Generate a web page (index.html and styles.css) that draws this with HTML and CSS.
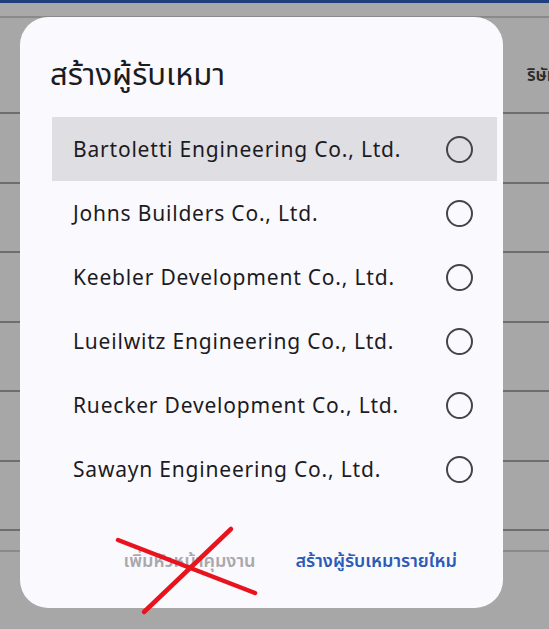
FILE: index.html
```html
<!DOCTYPE html>
<html lang="th">
<head>
<meta charset="utf-8">
<link rel="stylesheet" href="styles.css">
</head>
<body>
<div class="page">
  <div class="topbar"></div>
  <div class="subbar"></div>
  <div class="table">
    <div class="thead"><span class="th">ริษัท</span></div>
    <div class="tr"></div>
    <div class="tr"></div>
    <div class="tr"></div>
    <div class="tr"></div>
    <div class="tr"></div>
    <div class="tr"></div>
    <div class="tr short"></div>
  </div>
</div>

<div class="dialog">
  <h1 class="title">สร้างผู้รับเหมา</h1>
  <ul class="list">
    <li class="item selected"><span>Bartoletti Engineering Co., Ltd.</span><i class="radio"></i></li>
    <li class="item"><span>Johns Builders Co., Ltd.</span><i class="radio"></i></li>
    <li class="item"><span>Keebler Development Co., Ltd.</span><i class="radio"></i></li>
    <li class="item"><span>Lueilwitz Engineering Co., Ltd.</span><i class="radio"></i></li>
    <li class="item"><span>Ruecker Development Co., Ltd.</span><i class="radio"></i></li>
    <li class="item"><span>Sawayn Engineering Co., Ltd.</span><i class="radio"></i></li>
  </ul>
  <div class="actions">
    <button class="btn disabled">เพิ่มหัวหน้าคุมงาน</button>
    <button class="btn primary">สร้างผู้รับเหมารายใหม่</button>
  </div>
</div>

<svg class="cross" width="549" height="629" viewBox="0 0 549 629">
  <path d="M118 540 L255 593" stroke="#e8131d" stroke-width="4.5" stroke-linecap="round" fill="none"/>
  <path d="M231 529 L144 612" stroke="#e8131d" stroke-width="4.5" stroke-linecap="round" fill="none"/>
</svg>
</body>
</html>
```

FILE: styles.css
```css
html, body {
  margin: 0;
  padding: 0;
}
body {
  width: 549px;
  height: 629px;
  overflow: hidden;
  background: #a7a7a7;
  font-family: "Noto Sans", "Noto Sans Thai", "DejaVu Sans", sans-serif;
  position: relative;
}
.page {
  display: flex;
  flex-direction: column;
}
.topbar {
  height: 3px;
  background: #1f3e7c;
}
.subbar {
  height: 13px;
  background: #a9a9a9;
  border-bottom: 2px solid #8a8a8a;
}
.table {
  display: flex;
  flex-direction: column;
}
.thead {
  height: 94px;
  border-bottom: 2px solid #6e6e6e;
  display: flex;
  align-items: center;
  padding-left: 527px;
  white-space: nowrap;
}
.th {
  font-size: 17px;
  font-weight: 600;
  color: #2a2a2a;
  margin-top: 22px;
}
.tr {
  height: 67.5px;
  border-bottom: 2px solid #6e6e6e;
}
.tr.short {
  height: 19px;
  border-bottom: 2px solid #8a8a8a;
}
.dialog {
  position: absolute;
  left: 20px;
  top: 17px;
  width: 483px;
  height: 591px;
  background: #faf9fe;
  border-radius: 28px;
  box-sizing: border-box;
  padding: 0 6px 0 32px;
  display: flex;
  flex-direction: column;
}
.title {
  margin: 34px 0 0 -2px;
  height: 66px;
  font-size: 31px;
  font-weight: 400;
  line-height: 44px;
  color: #1c1b1f;
}
.list {
  list-style: none;
  margin: 0;
  padding: 0;
  display: flex;
  flex-direction: column;
}
.item {
  height: 64px;
  display: flex;
  align-items: center;
  justify-content: space-between;
  padding: 0 24px 0 21px;
  font-size: 21px;
  letter-spacing: 0.8px;
  color: #1c1b1f;
}
.item.selected {
  background: #dfdee3;
}
.radio {
  width: 23px;
  height: 23px;
  border: 2px solid #45434b;
  border-radius: 50%;
  display: block;
}
.actions {
  display: flex;
  justify-content: flex-end;
  gap: 40px;
  margin-top: 47px;
  padding-right: 40px;
}
.btn {
  background: none;
  border: none;
  padding: 0;
  font-family: inherit;
  font-size: 18px;
  font-weight: 600;
  line-height: 24px;
}
.btn.disabled {
  color: #a9a8ad;
}
.btn.primary {
  color: #2b5bb5;
}
.cross {
  position: absolute;
  left: 0;
  top: 0;
  pointer-events: none;
}
```
